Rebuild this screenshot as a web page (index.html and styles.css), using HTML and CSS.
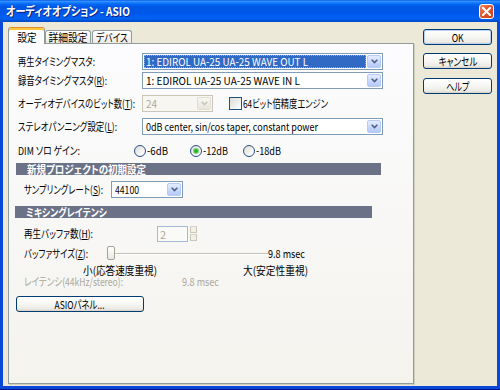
FILE: index.html
```html
<!DOCTYPE html>
<html lang="ja">
<head>
<meta charset="utf-8">
<link rel="stylesheet" href="styles.css">
</head>
<body>
<div class="window">
  <div class="titlebar">
    <span class="title"><span class="fit" data-fit="124">オーディオオプション - ASIO</span></span>
    <span class="close"><svg width="9" height="9" viewBox="0 0 9 9"><path d="M1 1L8 8M8 1L1 8" stroke="#fff" stroke-width="2" stroke-linecap="square"/></svg></span>
  </div>
  <div class="client">
    <div class="tabctl">
      <div class="tabs">
        <div class="tab sel t1"><span class="fit c" data-fit="19">設定</span></div>
        <div class="tab t2"><span class="fit c" data-fit="39">詳細設定</span></div>
        <div class="tab t3"><span class="fit c" data-fit="32">デバイス</span></div>
      </div>
      <div class="panel">
        <div class="row r1">
          <span class="lbl lw-main"><span class="fit" data-fit="77">再生タイミングマスタ:</span></span>
          <div class="combo cw-long focus"><span class="val"><span class="fit" data-fit="162">1: EDIROL UA-25 UA-25 WAVE OUT L</span></span><span class="arr"><svg width="7" height="5" viewBox="0 0 7 5"><path d="M0.7 0.7L3.5 3.5L6.3 0.7" stroke="#4D6185" stroke-width="1.6" fill="none"/></svg></span></div>
        </div>
        <div class="row r2">
          <span class="lbl lw-main"><span class="fit" data-fit="89">録音タイミングマスタ(<u>R</u>):</span></span>
          <div class="combo cw-long"><span class="val"><span class="fit" data-fit="154">1: EDIROL UA-25 UA-25 WAVE IN L</span></span><span class="arr"><svg width="7" height="5" viewBox="0 0 7 5"><path d="M0.7 0.7L3.5 3.5L6.3 0.7" stroke="#4D6185" stroke-width="1.6" fill="none"/></svg></span></div>
        </div>
        <div class="row r3">
          <span class="lbl lw-main"><span class="fit" data-fit="117">オーディオデバイスのビット数(<u>T</u>):</span></span>
          <div class="combo cw-bit dis"><span class="val"><span class="fit" data-fit="11">24</span></span><span class="arr"><svg width="7" height="5" viewBox="0 0 7 5"><path d="M0.7 0.7L3.5 3.5L6.3 0.7" stroke="#C9C7BA" stroke-width="1.6" fill="none"/></svg></span></div>
          <span class="chk"></span>
          <span class="chk-lbl"><span class="fit" data-fit="85">64ビット倍精度エンジン</span></span>
        </div>
        <div class="row r4">
          <span class="lbl lw-main"><span class="fit" data-fit="99">ステレオパンニング設定(<u>L</u>):</span></span>
          <div class="combo cw-long"><span class="val"><span class="fit" data-fit="172">0dB center, sin/cos taper, constant power</span></span><span class="arr"><svg width="7" height="5" viewBox="0 0 7 5"><path d="M0.7 0.7L3.5 3.5L6.3 0.7" stroke="#4D6185" stroke-width="1.6" fill="none"/></svg></span></div>
        </div>
        <div class="row r5">
          <span class="lbl lw-dim"><span class="fit" data-fit="62">DIM ソロ ゲイン:</span></span>
          <span class="rgroup rg1"><span class="radio"></span><span class="rtxt"><span class="fit" data-fit="21">-6dB</span></span></span>
          <span class="rgroup rg2"><span class="radio on"></span><span class="rtxt"><span class="fit" data-fit="25">-12dB</span></span></span>
          <span class="rgroup"><span class="radio"></span><span class="rtxt"><span class="fit" data-fit="25">-18dB</span></span></span>
        </div>
        <div class="sec sec1"><span class="fit" data-fit="119">新規プロジェクトの初期設定</span></div>
        <div class="row r6">
          <span class="lbl lw-sr"><span class="fit" data-fit="79">サンプリングレート(<u>S</u>):</span></span>
          <div class="combo cw-sr"><span class="val"><span class="fit" data-fit="24">44100</span></span><span class="arr"><svg width="7" height="5" viewBox="0 0 7 5"><path d="M0.7 0.7L3.5 3.5L6.3 0.7" stroke="#4D6185" stroke-width="1.6" fill="none"/></svg></span></div>
        </div>
        <div class="sec sec2"><span class="fit" data-fit="81">ミキシングレイテンシ</span></div>
        <div class="row r7">
          <span class="lbl lw-buf"><span class="fit" data-fit="69">再生バッファ数(<u>H</u>):</span></span>
          <span class="spin-in">2</span>
          <span class="spin-btn"><span class="sb"></span><span class="sb"></span></span>
        </div>
        <div class="row r8">
          <span class="lbl lw-bsz"><span class="fit" data-fit="64">バッファサイズ(<u>Z</u>):</span></span>
          <span class="thumb"></span>
          <span class="track"></span>
          <span class="msec"><span class="fit" data-fit="37">9.8 msec</span></span>
        </div>
        <div class="row r9">
          <span class="scale-min"><span class="fit" data-fit="74">小(応答速度重視)</span></span>
          <span><span class="fit" data-fit="65">大(安定性重視)</span></span>
        </div>
        <div class="row r10">
          <span class="lbl lw-lat"><span class="fit" data-fit="99">レイテンシ(44kHz/stereo):</span></span>
          <span><span class="fit" data-fit="37">9.8 msec</span></span>
        </div>
        <div class="btn asio"><span class="fit c" data-fit="50">ASIOパネル...</span></div>
      </div>
    </div>
    <div class="btncol">
      <div class="btn def"><span class="fit c" data-fit="12">OK</span></div>
      <div class="btn b2"><span class="fit c" data-fit="39">キャンセル</span></div>
      <div class="btn b3"><span class="fit c" data-fit="23">ヘルプ</span></div>
    </div>
  </div>
</div>
<script src="script.js"></script>
</body>
</html>
```

FILE: styles.css
```css
html, body {
  margin: 0;
  padding: 0;
  background: #ffffff;
}
body {
  font-family: "Noto Sans CJK JP", "Liberation Sans", sans-serif;
  font-size: 11px;
  font-feature-settings: "palt";
  color: #000;
}
.fit {
  display: inline-block;
  white-space: nowrap;
  transform-origin: 0 50%;
}
.fit.c {
  transform-origin: 50% 50%;
}
.window {
  width: 500px;
  height: 390px;
  display: flex;
  flex-direction: column;
  background: #0B47D8;
  box-sizing: border-box;
  border-bottom: 1px solid #00138C;
}
.titlebar {
  height: 22px;
  flex: none;
  display: flex;
  align-items: center;
  justify-content: space-between;
  padding: 0 6px 0 6px;
  background: linear-gradient(180deg, #0058EE 0%, #3A93FF 6%, #127DFF 12%, #0366F5 20%, #0058E6 30%, #0056E8 60%, #005DF5 72%, #0062EF 86%, #0052D6 94%, #0046C0 100%);
}
.title {
  color: #fff;
  font-weight: bold;
  font-size: 12px;
  line-height: 22px;
  text-shadow: 1px 1px 0 #0A1E80;
}
.close {
  width: 15px;
  height: 15px;
  box-sizing: border-box;
  border: 1px solid #fff;
  border-radius: 3px;
  background: linear-gradient(135deg, #F08B63 0%, #E2572A 45%, #C8401B 100%);
  display: flex;
  align-items: center;
  justify-content: center;
}
.client {
  flex: 1;
  margin: 0 3px 3px 3px;
  background: #ECE9D8;
  display: flex;
  align-items: flex-start;
  padding: 5px 0 0 5px;
  box-sizing: border-box;
}
.tabctl {
  width: 406px;
  flex: none;
}
.tabs {
  display: flex;
  align-items: flex-end;
  height: 17px;
  margin-bottom: -1px;
  position: relative;
  z-index: 1;
}
.tab {
  box-sizing: border-box;
  height: 13px;
  margin-bottom: 1px;
  border: 1px solid #919B9C;
  border-bottom: none;
  border-radius: 3px 3px 0 0;
  background: linear-gradient(180deg, #FFFFFF, #ECEBE5);
  display: flex;
  align-items: center;
  justify-content: center;
  line-height: 12px;
  white-space: nowrap;
}
.tab.sel {
  height: 17px;
  margin-bottom: 0;
  border-top: 1px solid #E68B2C;
  box-shadow: inset 0 2px 0 #FFC83C;
  background: #FCFCFE;
  line-height: 16px;
  padding-top: 1px;
}
.t1 { width: 37px; }
.t2 { width: 46px; }
.t3 { width: 40px; margin-left: 1px; }
.panel {
  box-sizing: border-box;
  height: 341px;
  border: 1px solid #919B9C;
  background: linear-gradient(180deg, #FCFCFE 0%, #F4F3EE 100%);
  box-shadow: 1px 1px 0 #D0CEBF;
}
.row {
  display: flex;
  align-items: center;
  height: 17px;
  line-height: 17px;
  white-space: nowrap;
}
.lbl { flex: none; }
.r1 { margin-top: 9px; padding-left: 9px; }
.r2 { margin-top: 2px; padding-left: 9px; }
.r3 { margin-top: 6px; padding-left: 9px; }
.r4 { margin-top: 6px; padding-left: 9px; }
.r5 { margin-top: 7px; padding-left: 9px; }
.lw-main { width: 124px; }
.lw-dim { width: 116px; }
.combo {
  flex: none;
  box-sizing: border-box;
  height: 17px;
  border: 1px solid #7F9DB9;
  background: #fff;
  display: flex;
  padding: 1px;
}
.combo .val {
  flex: 1;
  min-width: 0;
  padding-left: 2px;
  line-height: 13px;
}
.combo.focus .val {
  background: #316AC5;
  color: #fff;
  outline: 1px dotted #8FA9D9;
  outline-offset: -1px;
}
.arr {
  flex: none;
  width: 14px;
  margin-left: 1px;
  box-sizing: border-box;
  border: 1px solid #B7CAF5;
  border-radius: 2px;
  background: linear-gradient(180deg, #E4ECFE 0%, #C6D6FC 60%, #B5C9F7 100%);
  display: flex;
  align-items: center;
  justify-content: center;
}
.cw-long { width: 241px; }
.cw-bit { width: 71px; }
.cw-sr { width: 72px; }
.combo.dis {
  border-color: #C9C7BA;
  background: #F7F6F1;
  color: #ACA899;
}
.combo.dis .arr {
  border-color: #E0DED3;
  background: linear-gradient(180deg, #F7F6F2, #E8E6DC);
}
.chk {
  flex: none;
  width: 13px;
  height: 13px;
  box-sizing: border-box;
  margin-left: 16px;
  border: 1px solid #1C5180;
  background: linear-gradient(135deg, #DCDCD7 0%, #FFFFFF 100%);
}
.chk-lbl { margin-left: 1px; }
.rgroup {
  display: flex;
  align-items: center;
  flex: none;
}
.rg1 { width: 56px; }
.rg2 { width: 53px; }
.radio {
  flex: none;
  width: 12px;
  height: 12px;
  box-sizing: border-box;
  border-radius: 50%;
  border: 1px solid #2B4F82;
  background: linear-gradient(135deg, #DCDCD7 0%, #FFFFFF 90%);
  display: flex;
  align-items: center;
  justify-content: center;
}
.radio.on::after {
  content: "";
  width: 4px;
  height: 4px;
  border-radius: 50%;
  background: #2BB02B;
  box-shadow: 0 0 0 1px #7ED67B;
}
.rtxt { margin-left: 1px; }
.sec {
  box-sizing: border-box;
  height: 12px;
  line-height: 12px;
  background: #6B7186;
  color: #fff;
  font-weight: bold;
  padding-left: 11px;
  white-space: nowrap;
}
.sec1 { margin-top: 4px; margin-left: 7px; width: 365px; }
.sec2 { margin-top: 8px; margin-left: 6px; width: 357px; }
.r6 { margin-top: 6px; padding-left: 15px; }
.lw-sr { width: 87px; }
.r7 { margin-top: 7px; padding-left: 15px; }
.lw-buf { width: 133px; }
.spin-in {
  flex: none;
  box-sizing: border-box;
  width: 31px;
  height: 16px;
  border: 1px solid #A5B9D6;
  background: #FAFAF7;
  color: #ACA899;
  padding-left: 2px;
  line-height: 14px;
}
.spin-btn {
  flex: none;
  width: 7px;
  height: 15px;
  margin-left: 2px;
  display: flex;
  flex-direction: column;
  justify-content: space-between;
}
.sb {
  box-sizing: border-box;
  height: 7px;
  border: 1px solid #C9C7BA;
  border-top-color: #D8D6CB;
  background: #F1EFE6;
}
.r8 { margin-top: 3px; padding-left: 15px; height: 16px; }
.lw-bsz { width: 83px; }
.thumb {
  flex: none;
  box-sizing: border-box;
  width: 8px;
  height: 14px;
  border: 1px solid #A4A398;
  border-radius: 2px;
  background: linear-gradient(180deg, #FFFFFF, #E9E8E2);
}
.track {
  flex: none;
  width: 153px;
  height: 1px;
  margin-top: 1px;
  background: #C4C2B6;
  box-shadow: 0 1px 0 #FFFFFF;
}
.r9 { margin-top: 4px; height: 11px; line-height: 11px; padding-left: 74px; }
.scale-min { width: 160px; flex: none; }
.r10 { height: 11px; line-height: 11px; padding-left: 15px; color: #ACA899; }
.lw-lat { width: 158px; }
.btn {
  box-sizing: border-box;
  height: 16px;
  border: 1px solid #003C74;
  border-radius: 3px;
  background: linear-gradient(180deg, #FFFFFF 0%, #F6F6F2 50%, #ECEBE6 85%, #D6D0C5 100%);
  text-align: center;
  line-height: 14px;
  white-space: nowrap;
}
.asio { margin-top: 9px; margin-left: 7px; width: 128px; }
.btncol {
  flex: none;
  width: 69px;
  margin-left: 9px;
  padding-top: 2px;
  display: flex;
  flex-direction: column;
}
.btn.def {
  box-shadow: inset 0 0 0 1px #B8D0F4;
}
.b2 { margin-top: 8px; }
.b3 { margin-top: 9px; }
```

FILE: script.js
```js
function fitTexts() {
  var items = document.querySelectorAll('[data-fit]');
  for (var i = 0; i < items.length; i++) {
    var el = items[i];
    el.style.transform = 'none';
    var w = el.getBoundingClientRect().width;
    var target = parseFloat(el.getAttribute('data-fit'));
    if (w > 0 && target > 0) {
      el.style.transform = 'scaleX(' + (target / w).toFixed(3) + ')';
    }
  }
}
fitTexts();
if (document.fonts && document.fonts.ready) {
  document.fonts.ready.then(fitTexts);
}
```
